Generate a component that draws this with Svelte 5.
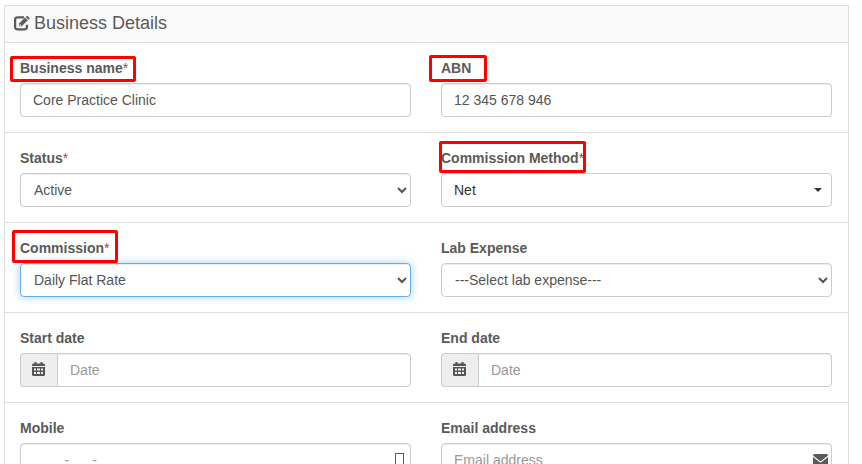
<script>
	//? form rows, two fields each
	const rows = [
		[
			{ id: "business-name", label: "Business name", required: true, mark: "mark-name", type: "text", value: "Core Practice Clinic" },
			{ id: "abn", label: "ABN", mark: "mark-abn", type: "text", value: "12 345 678 946" },
		],
		[
			{ id: "status", label: "Status", required: true, type: "select", options: ["Active", "Inactive"] },
			{ id: "method", label: "Commission Method", required: true, mark: "mark-method", type: "picker", options: ["Net", "Gross"] },
		],
		[
			{ id: "commission", label: "Commission", required: true, mark: "mark-commission", type: "select", active: true, options: ["Daily Flat Rate", "Percentage"] },
			{ id: "lab-expense", label: "Lab Expense", type: "select", options: ["---Select lab expense---"] },
		],
		[
			{ id: "start-date", label: "Start date", type: "date" },
			{ id: "end-date", label: "End date", type: "date" },
		],
		[
			{ id: "mobile", label: "Mobile", type: "text", icon: "mobile", value: "", placeholder: "____-___-___" },
			{ id: "email", label: "Email address", type: "text", icon: "email", value: "", placeholder: "Email address" },
		],
	];
</script>

<form class="panel">
	<h1 class="panel-heading">
		<svg class="edit-icon" viewBox="0 0 16 15" aria-hidden="true">
			<path d="M10 1.300H3.600A2.500 2.500 0 0 0 1.100 3.800V10.900A2.500 2.500 0 0 0 3.600 13.400H10.500A2.500 2.500 0 0 0 13 10.900V8.800" fill="none" stroke="currentColor" stroke-width="2.300" />
			<path d="M4.800 7.500 11 1.300 14 4.300 7.800 10.500H4.800Z" fill="currentColor" stroke="#fafafa" stroke-width=".5" />
			<path d="M11.800 .900 12.500.200Q13.100 -.400 13.800.300L15.300 1.800Q15.900 2.400 15.300 3L14.600 3.700Z" fill="currentColor" />
			<path d="M6 8.300V9.400H7.200" fill="none" stroke="#fafafa" stroke-width=".9" />
		</svg>
		Business Details
	</h1>
	{#each rows as row}
		<div class="row">
			{#each row as field}
				<div class="field">
					<label for={field.id}>
						{field.label}{#if field.required}<span class="required">*</span>{/if}
						{#if field.mark}
							<span class="mark {field.mark}"></span>
						{/if}
					</label>
					{#if field.type === "select"}
						<select id={field.id} class="control native" class:active={field.active}>
							{#each field.options as option}
								<option>{option}</option>
							{/each}
						</select>
					{:else if field.type === "picker"}
						<div class="control-wrapper">
							<select id={field.id} class="control picker">
								{#each field.options as option}
									<option>{option}</option>
								{/each}
							</select>
							<span class="caret"></span>
						</div>
					{:else if field.type === "date"}
						<div class="input-group">
							<span class="addon">
								<svg class="calendar-icon" viewBox="0 0 13 14" aria-hidden="true">
									<path d="M0 4V3Q0 1.500 1.500 1.500H2.500V0H4.500V1.500H8.500V0H10.500V1.500H11.500Q13 1.500 13 3V4Z" fill="currentColor" />
									<path d="M0 5H13V12.500Q13 14 11.500 14H1.500Q0 14 0 12.500Z" fill="currentColor" />
									<path d="M2 6.500H4V8.500H2ZM5 6.500H8V8.500H5ZM9 6.500H11V8.500H9ZM2 10H4V12H2ZM5 10H8V12H5ZM9 10H11V12H9Z" fill="#eee" />
								</svg>
							</span>
							<input id={field.id} class="control" type="text" placeholder="Date" />
						</div>
					{:else}
						<div class="control-wrapper">
							<input id={field.id} class="control" type="text" value={field.value} placeholder={field.placeholder} />
							{#if field.icon === "mobile"}
								<svg class="mobile-icon" viewBox="0 0 9 13" aria-hidden="true">
									<rect x=".5" y=".5" width="8" height="12" fill="none" stroke="currentColor" />
								</svg>
							{:else if field.icon === "email"}
								<svg class="email-icon" viewBox="0 0 15 12" aria-hidden="true">
									<path d="M0 1.500Q0 0 1.500 0H13.500Q15 0 15 1.500L8.500 6.700Q7.500 7.400 6.500 6.700Z" fill="currentColor" />
									<path d="M0 3 6 7.700Q7.500 8.700 9 7.700L15 3V10.500Q15 12 13.500 12H1.500Q0 12 0 10.500Z" fill="currentColor" />
								</svg>
							{/if}
						</div>
					{/if}
				</div>
			{/each}
		</div>
	{/each}
</form>

<style>
	:global(body) {
		background-color: #fff;
		color: #5a5a5a;
		font-family: "Liberation Sans", Arial, sans-serif;
		font-size: 14px;
		line-height: 20px;
	}

	.panel {
		margin: 5px 13px 20px 4px;
		border: 1px solid #ddd;
	}

	.panel-heading {
		display: flex;
		align-items: center;
		gap: 4px;
		margin: 0;
		padding: 7px 9px 9px;
		background-color: #fafafa;
		border-bottom: 1px solid #ddd;
		font-size: 18px;
		font-weight: normal;
		line-height: 20px;
	}

	.edit-icon {
		width: 16px;
		height: 15px;
		overflow: visible;
	}

	.row {
		display: grid;
		grid-template-columns: 1fr 1fr;
		gap: 30px;
		padding: 15px 16px 15px 15px;
		border-bottom: 1px solid #ddd;
	}
	.row:last-child {
		border-bottom: none;
	}

	.field {
		min-width: 0;
	}

	label {
		display: block;
		position: relative;
		margin-bottom: 5px;
		font-weight: bold;
	}
	.required {
		color: #a94442;
		font-weight: normal;
	}

	.control {
		box-sizing: border-box;
		display: block;
		width: 100%;
		height: 34px;
		margin: 0;
		padding: 6px 12px;
		background-color: #fff;
		border: 1px solid #ccc;
		border-radius: 4px;
		box-shadow: inset 0 1px 1px rgba(0, 0, 0, 0.075);
		color: #555;
		font-family: inherit;
		font-size: 14px;
		line-height: 20px;
		outline: 0;
	}
	.control::placeholder {
		color: #999;
		opacity: 1;
	}
	.control.active,
	.control:focus {
		border-color: #66afe9;
		box-shadow: inset 0 1px 1px rgba(0, 0, 0, 0.075), 0 0 8px rgba(102, 175, 233, 0.6);
	}
	.native {
		padding-left: 9px;
	}

	.control-wrapper {
		position: relative;
	}
	.picker {
		appearance: none;
		box-shadow: none;
		color: #333;
	}
	.caret {
		position: absolute;
		top: 15px;
		right: 10px;
		border-top: 4px solid #333;
		border-left: 4px solid transparent;
		border-right: 4px solid transparent;
		pointer-events: none;
	}

	.input-group {
		display: flex;
	}
	.input-group .control {
		flex: 1;
		min-width: 0;
		border-radius: 0 4px 4px 0;
	}
	.addon {
		display: flex;
		align-items: center;
		padding: 0 12px 0 11px;
		background-color: #eee;
		border: 1px solid #ccc;
		border-right: none;
		border-radius: 4px 0 0 4px;
		color: #555;
	}
	.calendar-icon {
		width: 13px;
		height: 14px;
		margin-bottom: 2px;
	}

	.mobile-icon {
		position: absolute;
		top: 10px;
		right: 7px;
		width: 9px;
		height: 13px;
	}
	.email-icon {
		position: absolute;
		top: 11px;
		right: 4px;
		width: 15px;
		height: 12px;
	}

	/* highlight boxes laid over the labels */
	.mark {
		box-sizing: border-box;
		position: absolute;
		border: 3px solid #fe0000;
		border-radius: 2px;
		pointer-events: none;
		z-index: 1;
	}
	.mark-name {
		top: -2px;
		left: -10px;
		width: 126px;
		height: 26px;
	}
	.mark-abn {
		top: -3px;
		left: -12px;
		width: 58px;
		height: 27px;
	}
	.mark-method {
		top: -7px;
		left: -2px;
		width: 147px;
		height: 32px;
	}
	.mark-commission {
		top: -8px;
		left: -8px;
		width: 106px;
		height: 33px;
	}
</style>
